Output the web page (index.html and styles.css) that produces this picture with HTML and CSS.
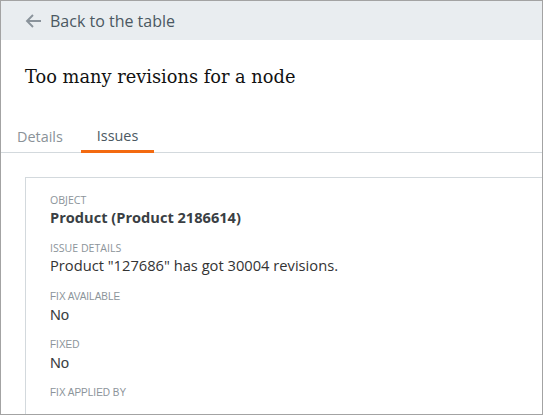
FILE: index.html
```html
<!DOCTYPE html>
<html>
<head>
<meta charset="utf-8">
<link rel="stylesheet" href="styles.css">
</head>
<body>
<div class="frame">
  <div class="topbar">
    <svg class="back-icon" width="16" height="14" viewBox="0 0 16 14"><path d="M16 7H2M8 1L2 7l6 6" fill="none" stroke="#8a939b" stroke-width="1.9"/></svg>
    <span class="back-text">Back to the table</span>
  </div>
  <h1 class="title">Too many revisions for a node</h1>
  <div class="tabs">
    <div class="tab">Details</div>
    <div class="tab active">Issues</div>
  </div>
  <div class="content">
    <div class="card">
      <div class="field">
        <div class="label">OBJECT</div>
        <div class="value bold">Product (Product 2186614)</div>
      </div>
      <div class="field">
        <div class="label">ISSUE DETAILS</div>
        <div class="value">Product "127686" has got 30004 revisions.</div>
      </div>
      <div class="field">
        <div class="label alt">FIX AVAILABLE</div>
        <div class="value alt">No</div>
      </div>
      <div class="field">
        <div class="label alt">FIXED</div>
        <div class="value alt">No</div>
      </div>
      <div class="field">
        <div class="label alt">FIX APPLIED BY</div>
      </div>
    </div>
  </div>
</div>
</body>
</html>
```
FILE: styles.css
```css
html, body { margin: 0; padding: 0; background: #fff; }
.frame {
  width: 543px; height: 415px; box-sizing: border-box;
  border: 1px solid #a3a3a3; overflow: hidden;
  font-family: "Open Sans", sans-serif;
}
.topbar {
  height: 39px; background: #e9edf0;
  display: flex; align-items: center; padding-left: 24px; gap: 9px;
}
.back-icon { display: block; }
.back-text { font-size: 16px; color: #4b5862; }
.title {
  margin: 0; padding: 26px 0 0 24px; height: 40px;
  font-family: "DejaVu Serif", serif; font-weight: normal; font-size: 17.8px; color: #111;
}
.tabs {
  display: flex; padding-left: 16px;
  border-bottom: 1px solid #d3d9dd; height: 45px; align-items: flex-end; box-sizing: border-box;
  margin-top: 2px;
}
.tab {
  font-size: 14.4px; color: #8a9298; padding: 0 0 5px 0; line-height: 20px;
}
.tab.active {
  color: #4b5862; margin-left: 18px; padding: 0 16px 4px 16px; border-bottom: 3px solid #f36a10; margin-bottom: -1px;
}
.content { padding: 24px 0 0 24px; }
.card {
  border: 1px solid #d3d9dd; border-right: none; padding: 15px 0 0 24px; height: 400px;
}
.field { margin-bottom: 13.3px; }
.label { font-size: 10.6px; color: #8c949a; line-height: 14px; }
.label.alt { font-family: "Liberation Sans", sans-serif; font-size: 10px; }
.value { font-size: 14.7px; color: #333; line-height: 21px; }
.value.bold { font-weight: bold; color: #3a3f44; font-size: 14.6px; }
.value.alt { font-family: "Liberation Sans", sans-serif; font-size: 15px; color: #3a3f44; }
```
